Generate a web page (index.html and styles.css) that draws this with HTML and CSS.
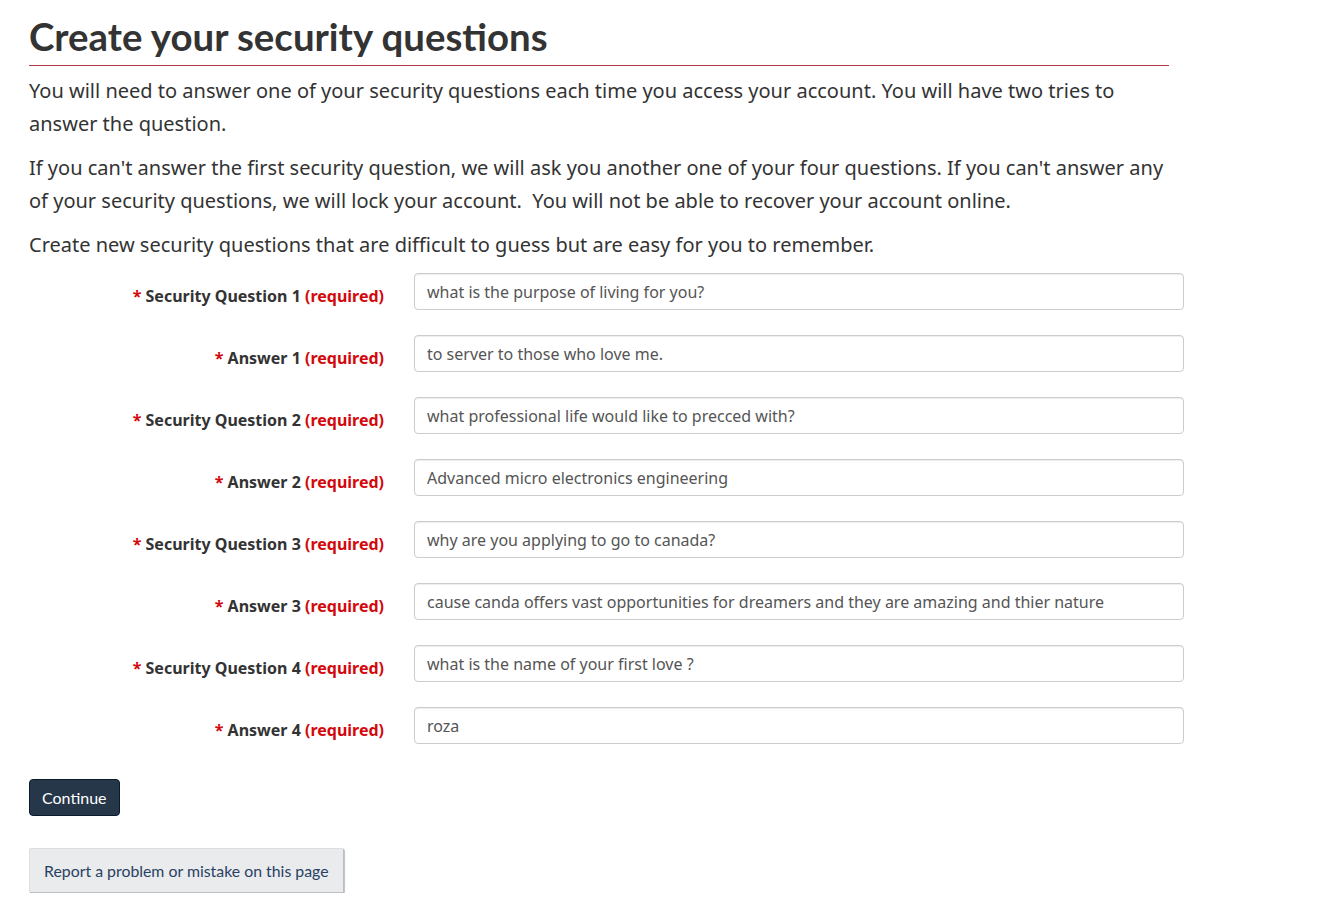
FILE: index.html
```html
<!DOCTYPE html>
<html lang="en">
<head>
<meta charset="utf-8">
<title>Create your security questions</title>
<link rel="stylesheet" href="styles.css">
</head>
<body>
<main class="container">
  <h1 class="page-title">Create your security questions</h1>
  <p>You will need to answer one of your security questions each time you access your account. You will have two tries to answer the question.</p>
  <p>If you can't answer the first security question, we will ask you another one of your four questions. If you can't answer any of your security questions, we will lock your account.&nbsp; You will not be able to recover your account online.</p>
  <p>Create new security questions that are difficult to guess but are easy for you to remember.</p>

  <form class="sq-form">
    <div class="form-row">
      <label class="form-label" for="q1"><span class="star">*</span> Security Question 1 <strong class="req">(required)</strong></label>
      <input class="form-input" id="q1" type="text" value="what is the purpose of living for you?">
    </div>
    <div class="form-row">
      <label class="form-label" for="a1"><span class="star">*</span> Answer 1 <strong class="req">(required)</strong></label>
      <input class="form-input" id="a1" type="text" value="to server to those who love me.">
    </div>
    <div class="form-row">
      <label class="form-label" for="q2"><span class="star">*</span> Security Question 2 <strong class="req">(required)</strong></label>
      <input class="form-input" id="q2" type="text" value="what professional life would like to precced with?">
    </div>
    <div class="form-row">
      <label class="form-label" for="a2"><span class="star">*</span> Answer 2 <strong class="req">(required)</strong></label>
      <input class="form-input" id="a2" type="text" value="Advanced micro electronics engineering">
    </div>
    <div class="form-row">
      <label class="form-label" for="q3"><span class="star">*</span> Security Question 3 <strong class="req">(required)</strong></label>
      <input class="form-input" id="q3" type="text" value="why are you applying to go to canada?">
    </div>
    <div class="form-row">
      <label class="form-label" for="a3"><span class="star">*</span> Answer 3 <strong class="req">(required)</strong></label>
      <input class="form-input" id="a3" type="text" value="cause canda offers vast opportunities for dreamers and they are amazing and thier nature">
    </div>
    <div class="form-row">
      <label class="form-label" for="q4"><span class="star">*</span> Security Question 4 <strong class="req">(required)</strong></label>
      <input class="form-input" id="q4" type="text" value="what is the name of your first love ?">
    </div>
    <div class="form-row">
      <label class="form-label" for="a4"><span class="star">*</span> Answer 4 <strong class="req">(required)</strong></label>
      <input class="form-input" id="a4" type="text" value="roza">
    </div>
    <div class="actions">
      <button type="button" class="btn-primary">Continue</button>
    </div>
  </form>

  <div class="report">
    <button type="button" class="btn-report">Report a problem or mistake on this page</button>
  </div>
</main>
</body>
</html>
```

FILE: styles.css
```css
html, body {
  margin: 0;
  padding: 0;
  background: #fff;
}

body {
  font-family: "Noto Sans", "DejaVu Sans", sans-serif;
  color: #333;
  font-size: 20px;
  line-height: 33px;
}

.container {
  width: 1140px;
  margin-left: 29px;
  padding: 0;
}

.page-title {
  font-family: Lato, "Liberation Sans", sans-serif;
  font-weight: 700;
  font-size: 38.4px;
  line-height: 42px;
  color: #333;
  margin: 15px 0 8px;
  padding-bottom: 8px;
  border-bottom: 1px solid #af3c43;
}

p {
  margin: 0 0 11px;
}

.sq-form {
  margin-top: 12px;
}

.form-row {
  display: grid;
  grid-template-columns: 355px 770px;
  column-gap: 30px;
  align-items: start;
  margin-bottom: 25px;
}

.form-label {
  text-align: right;
  font-size: 16px;
  font-weight: 700;
  line-height: 22px;
  padding-top: 12px;
  color: #333;
}

.star, .req {
  color: #d3080c;
  font-weight: 700;
}

.form-input {
  box-sizing: border-box;
  width: 770px;
  height: 37px;
  border: 1px solid #ccc;
  border-radius: 4px;
  padding: 6px 12px;
  font-family: "Noto Sans", "DejaVu Sans", sans-serif;
  font-size: 16px;
  color: #555;
  background: #fff;
  box-shadow: inset 0 1px 1px rgba(0,0,0,0.075);
}

.actions {
  padding-top: 10px;
}

.btn-primary {
  font-family: Lato, "Liberation Sans", sans-serif;
  font-size: 16px;
  line-height: 22px;
  background: #26374a;
  color: #fff;
  border: 1px solid #091c2d;
  border-radius: 4px;
  padding: 7px 12px;
  height: 37px;
  cursor: pointer;
}

.report {
  margin-top: 32px;
}

.btn-report {
  font-family: Lato, "Liberation Sans", sans-serif;
  font-size: 15.85px;
  line-height: 22px;
  white-space: nowrap;
  background: #eaebed;
  color: #284162;
  border: 1px solid #dcdee1;
  border-bottom-color: #bbbfc5;
  border-right-color: #bbbfc5;
  border-radius: 2px;
  padding: 10px 14px;
  height: 45px;
  box-shadow: 1px 1px 1px rgba(0,0,0,0.25);
  cursor: pointer;
}
```
